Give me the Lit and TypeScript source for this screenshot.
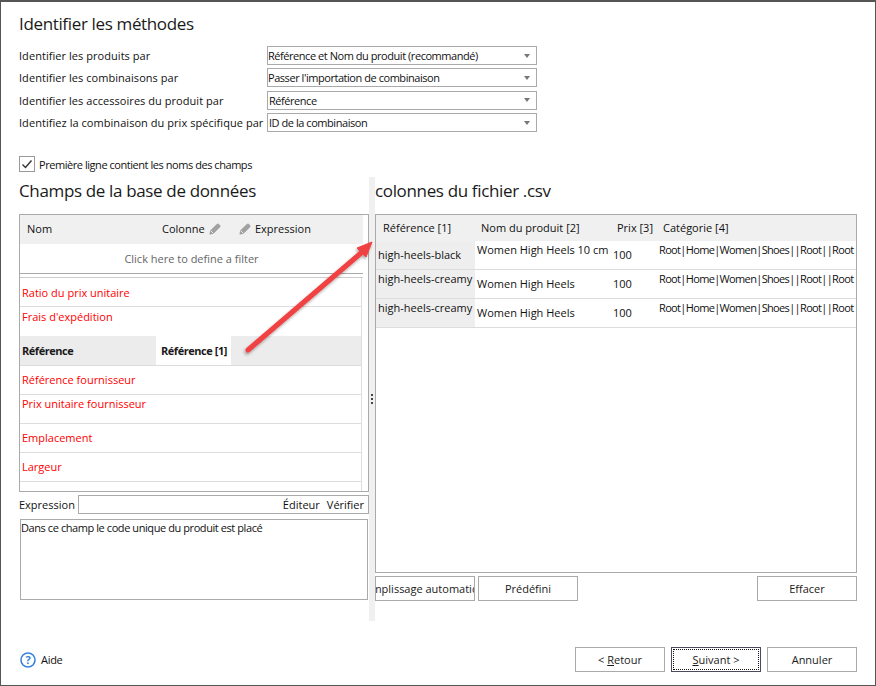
import { LitElement, css, html } from "lit";
import { customElement } from "lit/decorators.js";

const methods = [
  ["Identifier les produits par", "Référence et Nom du produit (recommandé)"],
  ["Identifier les combinaisons par", "Passer l'importation de combinaison"],
  ["Identifier les accessoires du produit par", "Référence"],
  ["Identifiez la combinaison du prix spécifique par", "ID de la combinaison"],
];

const fields = [
  { name: "Ratio du prix unitaire", h: 29, top: 15 },
  { name: "Frais d'expédition", h: 29, top: 10 },
  { name: "Référence", h: 30, top: 15, mapped: "Référence [1]" },
  { name: "Référence fournisseur", h: 29, top: 14 },
  { name: "Prix unitaire fournisseur", h: 29, top: 9 },
  { name: "Emplacement", h: 29, top: 14 },
  { name: "Largeur", h: 29, top: 14 },
];

const root = "Root|Home|Women|Shoes||Root||Root";
const csvRows = [
  ["high-heels-black", "Women High Heels 10 cm", true],
  ["high-heels-creamy", "Women High Heels", false],
  ["high-heels-creamy", "Women High Heels", false],
] as const;

const pencil = html`<svg class="pencil" viewBox="0 0 12 12" width="12" height="12">
  <path d="M.8 11.2 L1.6 7.6 L7.8 1.4 Q8.9 .4 10 1.4 L10.7 2.1 Q11.6 3.1 10.6 4.2 L4.4 10.4 Z" fill="#a2a2a2" stroke="#8a8a8a" stroke-width=".5"/>
  <path d="M1.8 7.8 L4.2 10.2" stroke="#ececec" stroke-width="1"/>
</svg>`;

@customElement("app-root")
export class AppRoot extends LitElement {
  static styles = css`
    :host {
      display: block;
      width: 876px;
      height: 686px;
      font-family: "Open Sans", "Noto Sans", sans-serif;
      font-size: 11px;
      color: #111;
    }
    * { box-sizing: border-box; }
    .window {
      position: relative;
      width: 876px;
      height: 686px;
      background: #fff;
      border: 1px solid #555;
      border-top-width: 2px;
      padding: 0 18px 0 18px;
      overflow: hidden;
    }
    h1, h2 { margin: 0; font-weight: 400; color: #1a1a1a; font-size: 17px; line-height: 24px; letter-spacing: -0.35px; }
    h1 { margin-top: 10px; height: 34px; }
    .methods { display: flex; flex-direction: column; gap: 3.4px; }
    .method { display: flex; align-items: center; height: 19px; }
    .method label { width: 248px; white-space: nowrap; letter-spacing: 0.05px; }
    .combo {
      width: 270px; height: 19px; border: 1px solid #aaa; display: flex; align-items: center;
      justify-content: space-between; padding: 0 6px 0 0; white-space: nowrap; letter-spacing: -0.45px;
    }
    .method:nth-child(n + 3) .combo { padding-left: 1px; }
    .combo::after { content: ""; border: 3.5px solid transparent; border-top: 4px solid #777; border-bottom: 0; }
    .check { display: flex; align-items: center; gap: 4px; margin-top: 24px; height: 16px; letter-spacing: -0.45px; }
    .box { width: 16px; height: 16px; border: 1px solid #999; display: flex; align-items: center; justify-content: center; }
    .panes { display: grid; grid-template-columns: 350px 6px 482px; margin-top: 5px; height: 444px; }
    .pane { min-width: 0; }
    .pane h2 { height: 35px; margin-top: 2px; white-space: nowrap; }
    .splitter { background: #f0f0f0; display: flex; flex-direction: column; align-items: center; justify-content: center; gap: 2px; }
    .splitter i { width: 2px; height: 2px; background: #444; }
    .grid { border: 1px solid #aaa; height: 278px; overflow: hidden; }
    .head { display: flex; align-items: center; height: 29px; padding-bottom: 2px; background: #f0f0f0; width: 343px; }
    .head .nom { width: 142px; padding-left: 7px; }
    .head .col { display: flex; align-items: center; gap: 4px; width: 77px; }
    .head .exp { display: flex; align-items: center; gap: 4px; }
    .filter { height: 29px; width: 343px; text-align: center; line-height: 29px; color: #666; }
    .strip { width: 343px; height: 5px; border: 1px solid #aaa; border-left: 0; border-right: 0; border-bottom-color: #ccc; }
    .fields { width: 342px; border-right: 1px solid #ddd; height: 214px; }
    .field { border-bottom: 1px solid #ddd; color: #f00; padding-left: 2px; line-height: 14px; white-space: nowrap; display: flex; }
    .field.mapped { background: #ececec; color: #1a1a1a; font-weight: 700; letter-spacing: -0.45px; }
    .field.nb { border-bottom: 0; }
    .field .nm { width: 134px; }
    .field .map { background: #fff; width: 75px; margin-top: -8px; padding-top: 8px; padding-left: 5px; height: 29px; }
    .expr { display: flex; align-items: center; height: 19px; margin-top: 3px; }
    .expr > span { width: 59px; }
    .expr div { flex: 1; height: 19px; border: 1px solid #aaa; display: flex; justify-content: flex-end; align-items: center; gap: 7px; padding-right: 4px; }
    .memo { margin: 5px 1px 0; height: 81px; border: 1px solid #aaa; padding: 1px 0; line-height: 14px; letter-spacing: -0.42px; }
    .csv { border: 1px solid #aaa; height: 359px; overflow: hidden; }
    .csv-head { display: flex; align-items: center; height: 26px; padding-bottom: 2px; background: #f0f0f0; white-space: nowrap; }
    .csv-head span:nth-child(1) { width: 105px; padding-left: 7px; }
    .csv-head span:nth-child(2) { width: 136px; }
    .csv-head span:nth-child(3) { width: 46px; }
    .csv-row { display: grid; grid-template-columns: 99px 136px 46px 1fr; height: 29px; border-bottom: 1px solid #ddd; white-space: nowrap; overflow: hidden; line-height: 14px; }
    .csv-row > div { overflow: hidden; padding-left: 2px; }
    .csv-row .ref { background: #eee; }
    .csv-row .root { letter-spacing: -0.65px; }
    .up { padding-top: 2px; }
    .down { padding-top: 7px; }
    .tools { display: flex; gap: 3px; margin-top: 3px; }
    button {
      font: inherit; color: #1a1a1a; background: #fff; border: 1px solid #aaa; padding: 0; height: 25px; width: 100px;
      white-space: nowrap; overflow: hidden; display: flex; align-items: center; justify-content: center;
    }
    .tools .last { margin-left: auto; }
    .footer { display: flex; align-items: center; margin-top: 26px; height: 25px; }
    .help { display: flex; align-items: center; gap: 5px; margin-left: 1px; letter-spacing: -0.3px; }
    .nav { display: flex; gap: 6px; margin-left: auto; }
    .nav button { width: 90px; }
    .nav .primary { border-color: #4a4a5a; outline: 1px dotted #111; outline-offset: -3px; }
    .arrow { position: absolute; left: 240px; top: 230px; pointer-events: none; }
  `;

  render() {
    return html`<div class="window">
      <h1>Identifier les méthodes</h1>
      <div class="methods">
        ${methods.map(([l, v]) => html`<div class="method"><label>${l}</label><div class="combo">${v}</div></div>`)}
      </div>
      <div class="check">
        <div class="box"><svg viewBox="0 0 12 12" width="12" height="12"><path d="M1.5 6.5 L4.5 9.5 L10.5 2.5" fill="none" stroke="#333" stroke-width="1.4"/></svg></div>
        Première ligne contient les noms des champs
      </div>
      <div class="panes">
        <div class="pane">
          <h2>Champs de la base de données</h2>
          <div class="grid">
            <div class="head">
              <span class="nom">Nom</span>
              <span class="col">Colonne ${pencil}</span>
              <span class="exp">${pencil} Expression</span>
            </div>
            <div class="filter">Click here to define a filter</div>
            <div class="strip"></div>
            <div class="fields">
              ${fields.map((f, i) => html`<div class="field ${f.mapped ? "mapped" : ""} ${i === 1 ? "nb" : ""}" style="height:${f.h}px;padding-top:${f.top - 7}px">
                <span class="nm">${f.name}</span>${f.mapped ? html`<span class="map">${f.mapped}</span>` : ""}
              </div>`)}
            </div>
          </div>
          <div class="expr"><span>Expression</span><div><span>Éditeur</span><span>Vérifier</span></div></div>
          <div class="memo">Dans ce champ le code unique du produit est placé</div>
        </div>
        <div class="splitter"><i></i><i></i><i></i></div>
        <div class="pane">
          <h2>colonnes du fichier .csv</h2>
          <div class="csv">
            <div class="csv-head"><span>Référence [1]</span><span>Nom du produit [2]</span><span>Prix [3]</span><span>Catégorie [4]</span></div>
            ${csvRows.map(([ref, name, first]) => html`<div class="csv-row">
              <div class="ref ${first ? "down" : "up"}">${ref}</div>
              <div class="${first ? "up" : "down"}">${name}</div>
              <div class="down">100</div>
              <div class="up root">${root}</div>
            </div>`)}
          </div>
          <div class="tools">
            <button>Remplissage automatique</button>
            <button>Prédéfini</button>
            <button class="last">Effacer</button>
          </div>
        </div>
      </div>
      <div class="footer">
        <div class="help">
          <svg viewBox="0 0 16 16" width="16" height="16"><circle cx="8" cy="8" r="7" fill="none" stroke="#3b82de" stroke-width="1.6"/><text x="8" y="12" text-anchor="middle" font-size="11" font-weight="700" fill="#3b82de">?</text></svg>
          Aide
        </div>
        <div class="nav">
          <button>&lt;&nbsp;<u>R</u>etour</button>
          <button class="primary"><u>S</u>uivant &gt;</button>
          <button>Annuler</button>
        </div>
      </div>
      <svg class="arrow" width="150" height="135" viewBox="0 0 150 135">
        <defs><filter id="s"><feDropShadow dx="-1" dy="2" stdDeviation="1.5" flood-color="#000" flood-opacity=".35"/></filter></defs>
        <g filter="url(#s)">
          <path d="M7 118 L120 21" stroke="#f04242" stroke-width="5" stroke-linecap="round"/>
          <path d="M131 10 L116 16 L125 25 Z" fill="#f04242" stroke="#f04242" stroke-linejoin="round"/>
        </g>
      </svg>
    </div>`;
  }
}
